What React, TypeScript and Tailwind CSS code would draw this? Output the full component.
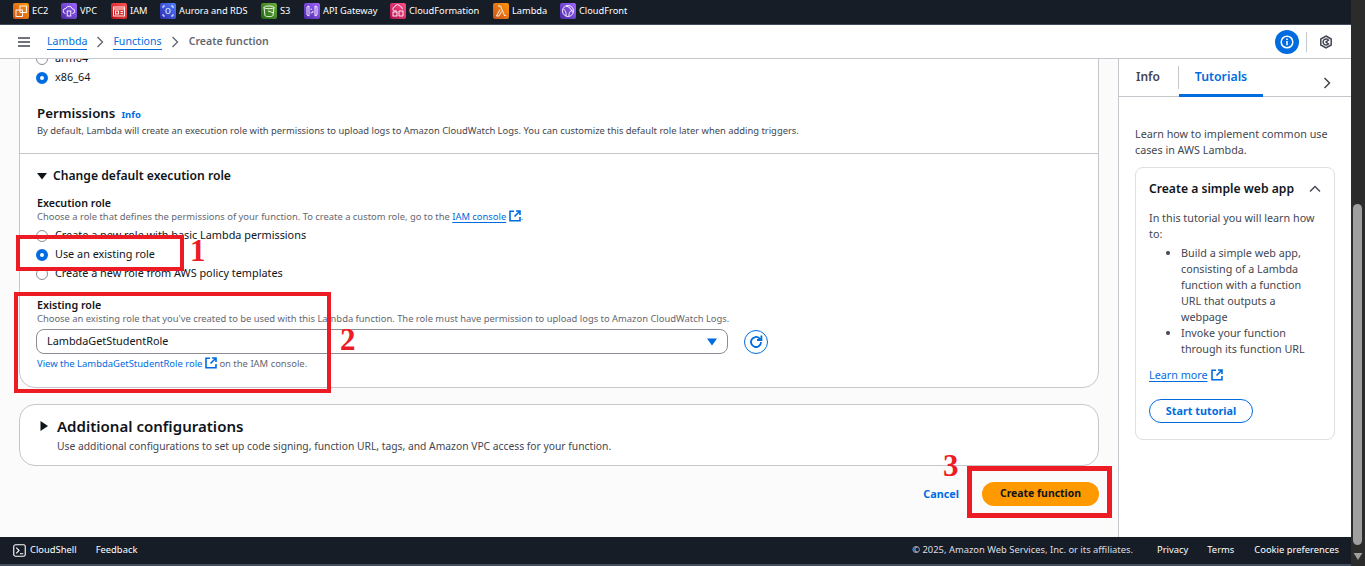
import type { ReactNode } from "react";

const services = [
  { name: "EC2", bg: "from-[#c8511b] to-[#ff9900]", w: "w-[48px]", icon: <><rect x="3" y="7" width="6.5" height="6.5" /><rect x="7" y="3" width="6.5" height="6.5" /></> },
  { name: "VPC", bg: "from-[#4d27a8] to-[#a166ff]", w: "w-[50px]", icon: <><path d="M4.5 10.5a2.5 2.5 0 0 1 .3-5 3.5 3.5 0 0 1 6.6.4 2.3 2.3 0 0 1 0 4.6" /><rect x="6.2" y="8" width="3.6" height="5" /></> },
  { name: "IAM", bg: "from-[#bd0816] to-[#ff5252]", w: "w-[49px]", icon: <><rect x="2.5" y="4" width="11" height="9" /><path d="M2.5 6h11" /><rect x="4.5" y="8" width="3" height="3" /><path d="M9.5 8.5h2.5M9.5 10.5h2.5" /></> },
  { name: "Aurora and RDS", bg: "from-[#2e27ad] to-[#527fff]", w: "w-[101px]", icon: <><path d="M5 3H3v2M11 3h2v2M5 13H3v-2M11 13h2v-2" /><rect x="6" y="5.5" width="4" height="5" rx="1.5" /></> },
  { name: "S3", bg: "from-[#1b660f] to-[#6cae3e]", w: "w-[43px]", icon: <><path d="M3 4.5c0-2 10-2 10 0l-1 8c-.3 1.5-7.7 1.5-8 0z" /><path d="M3 4.5c0 1.6 10 1.6 10 0M7 8l6 2" /></> },
  { name: "API Gateway", bg: "from-[#4d27a8] to-[#a166ff]", w: "w-[86px]", icon: <><path d="M5 3 3 4v8l2 1zM11 3l2 1v8l-2 1z" /><path d="M7.2 5.5v1.5M8.8 8v2M7.2 9v1.5" /></> },
  { name: "CloudFormation", bg: "from-[#b0084d] to-[#ff4f8b]", w: "w-[103px]", icon: <><path d="M7 8H5a2 2 0 0 1-.3-4 3 3 0 0 1 5.8-.2A2.2 2.2 0 0 1 12.5 6" /><rect x="3" y="9" width="4" height="4" /><path d="M9 8h4v5H9z" /></> },
  { name: "Lambda", bg: "from-[#c8511b] to-[#ff9900]", w: "w-[67px]", icon: <><path d="M5 3h2.5l4 9.5H13M7 6.5 3.5 13H6l2.5-4.5" /></> },
  { name: "CloudFront", bg: "from-[#4d27a8] to-[#a166ff]", w: "w-[70px]", icon: <><circle cx="8" cy="8" r="5.5" /><path d="M3.5 6c2 1.5 3 4 2.5 7M6 3c3 .5 5.5 3 6.5 6.5M9 13c-.5-2 .5-5 3.5-6" /></> },
];

function External() {
  return (
    <svg viewBox="0 0 12 12" className="inline-block w-[12px] h-[12px] align-[-2px] text-[#006ce0]" fill="none" stroke="currentColor">
      <path d="M5 1.2H1v9.6h10V7" strokeWidth="1.6" />
      <path d="M5.5 6.5 10.5 1.5M7 1h4v4" strokeWidth="1.6" />
    </svg>
  );
}

function Radio({ checked = false, label }: { checked?: boolean; label: string }) {
  return (
    <div className="flex items-center h-[19px] gap-[7px] text-[10.85px] text-[#0f141a]">
      {checked ? (
        <span className="w-[12px] h-[12px] rounded-full border-[4px] border-[#006ce0] bg-white shrink-0" />
      ) : (
        <span className="w-[12px] h-[12px] rounded-full border border-[#8c8c94] bg-white shrink-0" />
      )}
      <span>{label}</span>
    </div>
  );
}

function Mark({ className, children }: { className: string; children?: ReactNode }) {
  return <div className={`absolute ${className}`}>{children}</div>;
}

export default function App() {
  return (
    <div className="relative flex w-[1365px] h-[566px] overflow-hidden bg-[#2b2b2b] font-['Noto_Sans','Open_Sans',sans-serif]">
      <div className="flex flex-col w-[1351px] h-full">
        {/* favorites bar */}
        <div className="flex items-center h-[25px] pb-[3px] pl-[13px] bg-[#161d26] border-b border-[#414d5c] shrink-0">
          {services.map((s) => (
            <div key={s.name} className={`flex items-center gap-[3px] ${s.w} shrink-0`}>
              <span className={`w-[16px] h-[16px] rounded-[2px] bg-gradient-to-tr ${s.bg} shrink-0`}>
                <svg viewBox="0 0 16 16" className="w-[16px] h-[16px]" fill="none" stroke="white" strokeWidth="0.9">
                  {s.icon}
                </svg>
              </span>
              <span className="text-[9.25px] text-white whitespace-nowrap">{s.name}</span>
            </div>
          ))}
        </div>

        {/* breadcrumbs */}
        <div className="flex items-center h-[34px] pl-[18px] pr-[18px] bg-white border-b border-[#c6c6cd] shrink-0">
          <svg viewBox="0 0 12 10" className="w-[12px] h-[10px] mr-[17px]" fill="none" stroke="#424650" strokeWidth="1.6">
            <path d="M0 1h12M0 5h12M0 9h12" />
          </svg>
          <a className="text-[10.6px] text-[#006ce0] border-b border-[#006ce0] leading-[15px]">Lambda</a>
          <svg viewBox="0 0 8 12" className="w-[8px] h-[12px] mx-[9px] text-[#656871]" fill="none" stroke="currentColor" strokeWidth="1.4">
            <path d="m1.5 1 5 5-5 5" />
          </svg>
          <a className="text-[10.6px] text-[#006ce0] border-b border-[#006ce0] leading-[15px]">Functions</a>
          <svg viewBox="0 0 8 12" className="w-[8px] h-[12px] mx-[9.5px] text-[#656871]" fill="none" stroke="currentColor" strokeWidth="1.4">
            <path d="m1.5 1 5 5-5 5" />
          </svg>
          <span className="text-[10.6px] font-semibold text-[#656871]">Create function</span>
          <div className="ml-auto flex items-center">
            <span className="flex items-center justify-center w-[24px] h-[24px] rounded-full bg-[#006ce0]">
              <svg viewBox="0 0 14 14" className="w-[14px] h-[14px]" fill="none" stroke="white" strokeWidth="1.5">
                <circle cx="7" cy="7" r="5.8" />
                <path d="M7 6v4.2M7 3.4v1.5" />
              </svg>
            </span>
            <span className="w-px h-[20px] bg-[#c6c6cd] ml-[7px] mr-[12px]" />
            <svg viewBox="0 0 14 14" className="w-[14px] h-[14px]" fill="none" stroke="#424650" strokeWidth="1.5">
              <path d="M7 1 12.2 4v6L7 13l-5.2-3V4z" />
              <path d="M9.5 8.8A3 3 0 1 1 9.5 5.2L7 7z" />
            </svg>
          </div>
        </div>

        <div className="flex flex-1 min-h-0">
          {/* main form */}
          <div className="flex flex-col w-[1118px] px-[19px] bg-[#fbfbfc] overflow-hidden shrink-0">
            <div className="-mt-[31px] shrink-0 bg-white border border-[#c6c6cd] rounded-[16px]">
              <div className="pl-[16px] pt-[20px]">
                <Radio label="arm64" />
                <Radio checked label="x86_64" />
                <h2 className="mt-[17px] pl-[1px] flex items-baseline gap-[6px] text-[13.3px] leading-[18px] font-semibold text-[#0f141a]">
                  Permissions
                  <a className="text-[9.5px] font-bold text-[#006ce0]">Info</a>
                </h2>
                <p className="pl-[1px] text-[9.4px] leading-[14px] text-[#424650]">
                  By default, Lambda will create an execution role with permissions to upload logs to Amazon CloudWatch Logs. You can customize this default role later when adding triggers.
                </p>
              </div>
              <div className="mt-[15px] border-t border-[#c6c6cd] pl-[17px] pb-[16px]">
                <div className="mt-[13px] flex items-center gap-[6px] text-[12.15px] leading-[17px] font-semibold text-[#0f141a]">
                  <svg viewBox="0 0 10 10" className="w-[10px] h-[10px]" fill="#0f141a"><path d="M0 2h10L5 8.5z" /></svg>
                  Change default execution role
                </div>
                <div className="mt-[12px] text-[10.7px] leading-[14px] font-semibold text-[#0f141a]">Execution role</div>
                <p className="text-[9.4px] leading-[13px] text-[#656871]">
                  Choose a role that defines the permissions of your function. To create a custom role, go to the{" "}
                  <a className="text-[#006ce0] underline underline-offset-2">IAM console</a> <External />.
                </p>
                <div className="mt-[3px] -ml-[1px]">
                  <Radio label="Create a new role with basic Lambda permissions" />
                  <Radio checked label="Use an existing role" />
                  <Radio label="Create a new role from AWS policy templates" />
                </div>
                <div className="mt-[15px] text-[10.7px] leading-[14px] font-semibold text-[#0f141a]">Existing role</div>
                <p className="text-[9.4px] leading-[13px] text-[#656871]">
                  Choose an existing role that you've created to be used with this Lambda function. The role must have permission to upload logs to Amazon CloudWatch Logs.
                </p>
                <div className="mt-[4px] -ml-[1px] flex items-center">
                  <div className="flex items-center justify-between w-[692px] h-[25px] pl-[10px] pr-[10px] border border-[#8c8c94] rounded-[8px] bg-white text-[10.85px] text-[#0f141a]">
                    LambdaGetStudentRole
                    <svg viewBox="0 0 10 8" className="w-[10px] h-[8px]" fill="#006ce0"><path d="M0 .5h10L5 7.5z" /></svg>
                  </div>
                  <span className="ml-[16px] flex items-center justify-center w-[24px] h-[24px] rounded-full border border-[#006ce0]">
                    <svg viewBox="0 0 16 16" className="w-[16px] h-[16px]" fill="none" stroke="#006ce0" strokeWidth="1.8">
                      <path d="M13 8a5 5 0 1 1-1.5-3.6L13 6" />
                      <path d="M13.4 1.5V6H9" />
                    </svg>
                  </span>
                </div>
                <p className="mt-[3px] text-[9.45px] leading-[14px] text-[#656871]">
                  <a className="text-[#006ce0]">View the LambdaGetStudentRole role</a> <External /> on the IAM console.
                </p>
              </div>
            </div>

            <div className="mt-[16px] h-[62px] shrink-0 flex gap-[8px] pl-[19px] pt-[11px] bg-white border border-[#c6c6cd] rounded-[16px]">
              <svg viewBox="0 0 10 10" className="w-[10px] h-[10px] mt-[5px]" fill="#0f141a"><path d="M1.5 0 9 5l-7.5 5z" /></svg>
              <div>
                <div className="text-[15.05px] leading-[21px] font-semibold text-[#0f141a]">Additional configurations</div>
                <p className="mt-[2px] text-[10.3px] leading-[15px] text-[#424650]">
                  Use additional configurations to set up code signing, function URL, tags, and Amazon VPC access for your function.
                </p>
              </div>
            </div>

            <div className="mt-[16px] flex items-center justify-end gap-[23px] shrink-0">
              <a className="text-[10.8px] font-bold text-[#006ce0]">Cancel</a>
              <button className="w-[117px] h-[24px] rounded-full bg-[#ff9900] text-[10.45px] font-bold text-[#0f141a]">Create function</button>
            </div>
          </div>

          {/* help panel */}
          <div className="flex-1 bg-white border-l border-[#c6c6cd] min-w-0">
            <div className="relative flex h-[38px] border-b border-[#c6c6cd]">
              <div className="w-[59px] pl-[17px] pt-[9px] text-[12px] leading-[17px] font-semibold text-[#424650]">Info</div>
              <div className="my-[7px] w-px bg-[#c6c6cd]" />
              <div className="w-[84px] pt-[9px] h-[38px] border-b-[3px] border-[#006ce0] text-center text-[12.3px] leading-[17px] font-semibold text-[#006ce0]">Tutorials</div>
              <svg viewBox="0 0 8 12" className="ml-auto mr-[20px] mt-[18px] w-[8px] h-[12px]" fill="none" stroke="#424650" strokeWidth="1.5">
                <path d="m1.5 1 5 5-5 5" />
              </svg>
            </div>
            <div className="pl-[16px] pr-[15px] pt-[29px] text-[10.77px] leading-[16px] text-[#424650]">
              <p>Learn how to implement common use cases in AWS Lambda.</p>
              <div className="mt-[9px] w-[200px] h-[273px] pl-[13px] pr-[13px] pt-[12px] rounded-[8px] border border-[#dedee3]">
                <div className="flex items-center justify-between text-[12.15px] leading-[17px] font-semibold text-[#0f141a]">
                  Create a simple web app
                  <svg viewBox="0 0 12 8" className="w-[12px] h-[8px]" fill="none" stroke="#424650" strokeWidth="1.4">
                    <path d="m1 6.5 5-5 5 5" />
                  </svg>
                </div>
                <p className="mt-[13px]">In this tutorial you will learn how to:</p>
                <ul className="list-disc pl-[32px] mt-[3px]">
                  <li>Build a simple web app, consisting of a Lambda function with a function URL that outputs a webpage</li>
                  <li>Invoke your function through its function URL</li>
                </ul>
                <div className="mt-[10px]">
                  <a className="text-[#006ce0] underline underline-offset-2">Learn more</a>{" "}
                  <span className="ml-[1px]"><External /></span>
                </div>
                <button className="mt-[16px] w-[104px] h-[24px] rounded-full border border-[#006ce0] text-[10.8px] font-bold text-[#006ce0]">Start tutorial</button>
              </div>
            </div>
          </div>
        </div>

        {/* footer */}
        <div className="flex items-center h-[29px] mt-auto pl-[13px] pr-[12px] pb-[1px] bg-[#161d26] border-b-2 border-[#414d5c] text-[9.4px] text-white shrink-0">
          <svg viewBox="0 0 14 14" className="w-[13px] h-[13px] mr-[4px]" fill="none" stroke="white" strokeWidth="1.2">
            <rect x="0.8" y="0.8" width="12.4" height="12.4" rx="2" />
            <path d="m3.5 4 3 3-3 3M7.5 10.5H11" />
          </svg>
          <span>CloudShell</span>
          <span className="ml-[19px]">Feedback</span>
          <span className="ml-auto text-[#dedee3]">© 2025, Amazon Web Services, Inc. or its affiliates.</span>
          <span className="ml-[24px]">Privacy</span>
          <span className="ml-[19px]">Terms</span>
          <span className="ml-[20px]">Cookie preferences</span>
        </div>
      </div>

      {/* scrollbar */}
      <div className="flex flex-col items-center w-[14px] pt-[204px] pr-[1px] bg-[#2b2b2b] shrink-0">
        <div className="w-[9px] h-[341px] rounded-[5px] bg-[#9f9f9f]" />
        <svg viewBox="0 0 10 8" className="mt-[8px] w-[10px] h-[7px]" fill="#9f9f9f"><path d="M0 0h10L5 8z" /></svg>
      </div>

      {/* red annotations drawn over the screenshot */}
      <Mark className="left-[16px] top-[235px] w-[168px] h-[36px] border-[4px] border-[#ed1c24]" />
      <Mark className="left-[14px] top-[292px] w-[317px] h-[101px] border-[4px] border-[#ed1c24]" />
      <Mark className="left-[967px] top-[466px] w-[145px] h-[52px] border-[5px] border-[#ed1c24]" />
      <Mark className="left-[190px] top-[233px] font-['Liberation_Serif',serif] font-bold text-[31px] leading-[36px] text-[#ed1c24]">1</Mark>
      <Mark className="left-[340px] top-[322px] font-['Liberation_Serif',serif] font-bold text-[31px] leading-[36px] text-[#ed1c24]">2</Mark>
      <Mark className="left-[943px] top-[448px] font-['Liberation_Serif',serif] font-bold text-[31px] leading-[36px] text-[#ed1c24]">3</Mark>
    </div>
  );
}
